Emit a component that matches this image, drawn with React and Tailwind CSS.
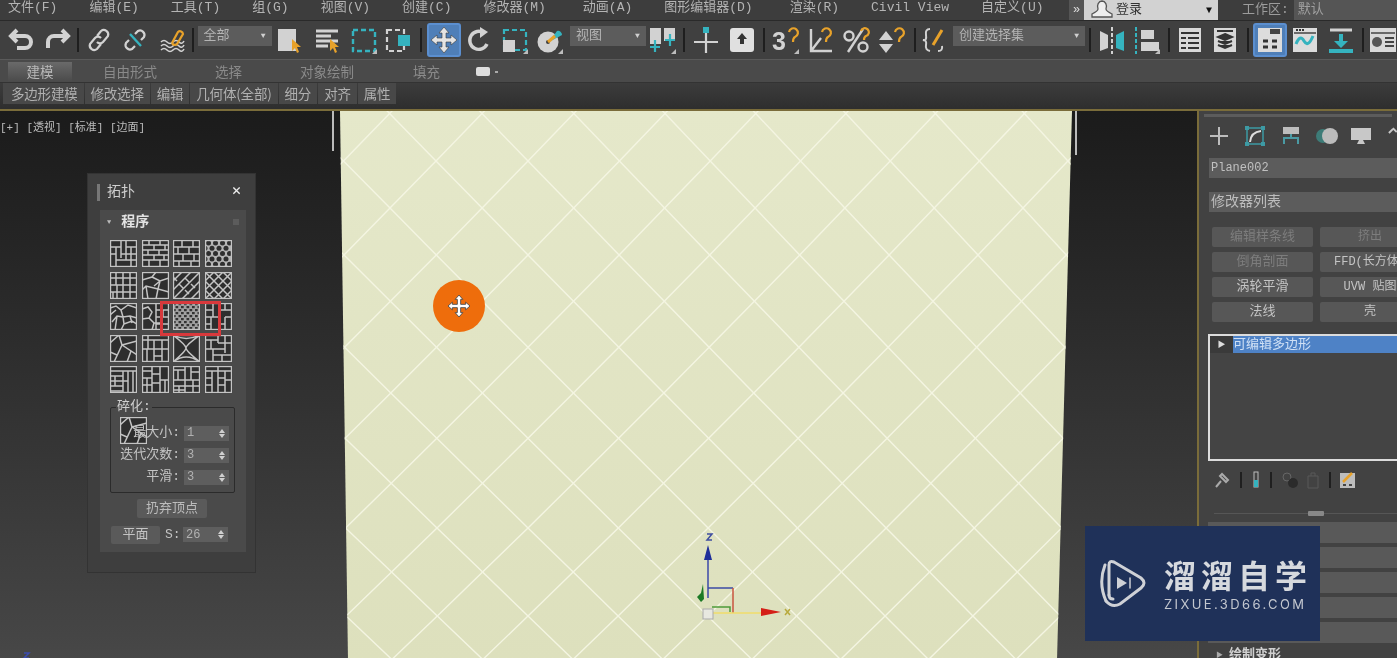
import React from "react";

const LT = "#d2d2d2";
const TEAL = "#35b3bf";
const ORG = "#e8a22a";

const MENUS = [
  ["文件(F)", 32], ["编辑(E)", 32], ["工具(T)", 32], ["组(G)", 32], ["视图(V)", 32], ["创建(C)", 32],
  ["修改器(M)", 37], ["动画(A)", 32], ["图形编辑器(D)", 37], ["渲染(R)", 32], ["Civil View", 32], ["自定义(U)", 0],
];

const Svg = ({ w = 28, h = 28, children }) => (
  <svg width={w} height={h} viewBox={`0 0 ${w} ${h}`} fill="none">{children}</svg>
);

const Corner = () => <path d="M27 28h-5l5-5z" fill="#bdbdbd" />;
const Cursor = ({ x = 16, y = 14 }) => <path d={`M${x} ${y}l0 12 3-3 2 5 2-1-2-5 4 0z`} fill={ORG} />;

const icons = {
  undo: <Svg><path d="M10 4L4 10l6 6M5 10h13a6 6 0 0 1 0 12h-8" stroke={LT} strokeWidth="4" /></Svg>,
  redo: <Svg><path d="M19 4l6 6-6 6M24 10H11a6 6 0 0 0-6 6v6" stroke={LT} strokeWidth="4" /></Svg>,
  link: <Svg><path d="M12 10l4-5a4.5 4.5 0 0 1 7 5l-5 6a4 4 0 0 1-6 0M16 18l-4 5a4.5 4.5 0 0 1-7-5l5-6a4 4 0 0 1 6 0" stroke={LT} strokeWidth="2.2" /></Svg>,
  unlink: <Svg><path d="M14 8l3-3a4.5 4.5 0 0 1 6 6l-3 3M14 20l-3 3a4.5 4.5 0 0 1-6-6l3-3" stroke={LT} strokeWidth="2.2" /><path d="M9 8l11 12" stroke={TEAL} strokeWidth="2.4" /></Svg>,
  bind: <Svg><path d="M3 16q3-3 6 0t6 0 6 0 5-1M3 20q3-3 6 0t6 0 6 0 5-1M3 24q3-3 6 0t6 0 6 0 5-1" stroke={LT} strokeWidth="1.6" /><path d="M14 17l6-11a3 3 0 0 1 5 2l-6 10a3 3 0 0 1-5-1" stroke={ORG} strokeWidth="2.2" /></Svg>,
  select: <Svg><rect x="2" y="3" width="18" height="22" fill={LT} /><Cursor x={16} y={13} /></Svg>,
  byName: <Svg><path d="M3 5h22M3 10h15M3 15h22M3 20h12" stroke={LT} strokeWidth="3" /><Cursor x={17} y={13} /></Svg>,
  rect: <Svg><rect x="3" y="4" width="22" height="21" stroke={TEAL} strokeWidth="2.4" strokeDasharray="5 3" /><Corner /></Svg>,
  win: <Svg><rect x="2" y="4" width="17" height="21" stroke={LT} strokeWidth="2.2" strokeDasharray="5 3" /><rect x="13" y="9" width="12" height="11" fill={TEAL} /></Svg>,
  move: <Svg><path d="M14 1l5 6h-3v5h5V9l6 5-6 5v-3h-5v5h3l-5 6-5-6h3v-5H7v3l-6-5 6-5v3h5V7H9z" fill="#e4e4e4" stroke="#3a3a3a" strokeWidth=".6" /></Svg>,
  rotate: <Svg><path d="M19 7a9 9 0 1 0 3 11" stroke={LT} strokeWidth="3.4" /><path d="M15 1v11l8-6z" fill={LT} /></Svg>,
  scale: <Svg><rect x="3" y="4" width="22" height="20" stroke={TEAL} strokeWidth="2.2" strokeDasharray="5 3" /><rect x="2" y="14" width="12" height="12" fill={LT} /><Corner /></Svg>,
  place: <Svg><circle cx="12" cy="16" r="10.5" fill={LT} /><circle cx="12" cy="16" r="2" fill="#3e3e3e" /><path d="M13 16l8-11a4 4 0 0 1 5 4z" fill={TEAL} /><path d="M12 16l7-6" stroke={ORG} strokeWidth="3" /><Corner /></Svg>,
  mirrorSel: <Svg><rect x="1" y="2" width="11" height="16" fill={LT} /><rect x="15" y="2" width="11" height="13" fill={LT} /><path d="M6 14v12M1 21h10M21 8v12M16 14h10" stroke={TEAL} strokeWidth="2.2" /><Corner /></Svg>,
  snapMove: <Svg><path d="M14 5v22M2 16h24" stroke={LT} strokeWidth="2.2" /><rect x="11" y="1" width="6" height="6" fill={TEAL} /></Svg>,
  upArrow: <Svg><rect x="2" y="2" width="24" height="24" rx="3" fill="#e0e0e0" /><path d="M14 7l5 6h-3v5h-4v-5H9z" fill="#333" /></Svg>,
  snap3: <Svg><text x="0" y="24" fontSize="25" fontWeight="700" fill={LT} fontFamily="Liberation Sans">3</text><path d="M17 6a4.500 4.500 0 1 1 6 5q-2 1-2 5" stroke={ORG} strokeWidth="2.2" /><Corner /></Svg>,
  angle: <Svg><path d="M4 3v22h21M4 25L14 12" stroke={LT} strokeWidth="2.4" /><path d="M15 6a4.500 4.500 0 1 1 6 5q-2 1-2 5" stroke={ORG} strokeWidth="2.2" /></Svg>,
  pct: <Svg><circle cx="7" cy="10" r="4.500" stroke={LT} strokeWidth="2.4" /><circle cx="21" cy="21" r="4.500" stroke={LT} strokeWidth="2.4" /><path d="M6 26L21 3" stroke={LT} strokeWidth="2.4" /><path d="M19 5a4 4 0 1 1 5 5q-2 1-2 4" stroke={ORG} strokeWidth="2.2" /></Svg>,
  spin: <Svg><path d="M8 5l7 9H1zM8 27l7-9H1z" fill={LT} /><path d="M17 6a4.500 4.500 0 1 1 6 5q-2 1-2 5" stroke={ORG} strokeWidth="2.2" /></Svg>,
  braces: <Svg><path d="M9 3Q4 3 5 9t-3 5q4 0 3 5t4 6M17 25q5 0 4-5" stroke={LT} strokeWidth="2" /><path d="M12 19l9-15" stroke={ORG} strokeWidth="3" /></Svg>,
  mirror: <Svg><path d="M2 5l8 4v13l-8 3z" fill={LT} /><path d="M26 5l-8 4v13l8 3z" fill={TEAL} /><path d="M14 1v27" stroke={LT} strokeWidth="2" strokeDasharray="4 2" /></Svg>,
  align: <Svg><path d="M3 1v27" stroke={TEAL} strokeWidth="2" strokeDasharray="4 2" /><rect x="8" y="4" width="13" height="9" fill={LT} /><rect x="8" y="16" width="18" height="9" fill={LT} /><Corner /></Svg>,
  table: <Svg><rect x="3" y="2" width="22" height="24" fill="#d8d8d8" /><path d="M5 7h18M5 12h5M12 12h11M5 17h5M12 17h11M5 22h5M12 22h11" stroke="#333" strokeWidth="2" /></Svg>,
  stack: <Svg><rect x="3" y="2" width="22" height="24" fill="#d8d8d8" /><path d="M6 5h16" stroke="#333" strokeWidth="2" /><path d="M14 8l7 3-7 3-7-3zM7 15l7 3 7-3M7 19l7 3 7-3" stroke="#333" strokeWidth="2" fill="#333" /></Svg>,
  schematic: <Svg><rect x="2" y="2" width="24" height="24" fill="#dcdcdc" /><path d="M14 8V3h10v5z" fill="#444" /><path d="M7 15h5M16 15h5M7 21h5M16 21h5" stroke="#333" strokeWidth="3" /></Svg>,
  curve: <Svg><rect x="2" y="2" width="24" height="24" fill="#dcdcdc" /><path d="M3 7h22" stroke="#444" strokeWidth="1.500" /><path d="M5 18q4-10 8-3t9-5" stroke={TEAL} strokeWidth="3" /><path d="M5 4h8" stroke="#333" strokeWidth="2" strokeDasharray="2 1" /></Svg>,
  dl: <Svg><path d="M3 4h22" stroke={LT} strokeWidth="3" /><path d="M12 8h4v7h5l-7 7-7-7h5z" fill={TEAL} /><path d="M2 25h24" stroke={TEAL} strokeWidth="4" /></Svg>,
  render: <Svg><rect x="2" y="2" width="26" height="24" fill="#d8d8d8" /><path d="M3 7h24" stroke="#444" strokeWidth="1.500" /><circle cx="9" cy="16" r="5" fill="#555" /><path d="M17 12h9M17 16h9M17 20h9" stroke="#444" strokeWidth="2" /></Svg>,
  login: <svg width="24" height="20" viewBox="0 0 24 20" fill="none"><path d="M12 1a4.500 5.500 0 0 1 4 8q0 2 6 5v3H2v-3q6-3 6-5a4.500 5.500 0 0 1 4-8z" stroke="#555" strokeWidth="1.300" fill="#eee" /></svg>,
};

const Cell = ({ w = 36, name, active }) => (
  <div style={{ width: w }} className="flex h-[36px] shrink-0 items-center justify-center">
    {active ? (
      <div className="flex h-[34px] w-[34px] items-center justify-center rounded-[3px] border-2 border-[#5b8fd0] bg-[#4f7fb8]">{icons[name]}</div>
    ) : (
      icons[name]
    )}
  </div>
);

const Sep = ({ w = 6 }) => (
  <div style={{ width: w }} className="flex shrink-0 justify-center">
    <div className="h-[24px] w-[2px] bg-[#1e1e1e]" />
  </div>
);

const Drop = ({ label, w }) => (
  <div style={{ width: w }} className="flex h-[20px] shrink-0 -translate-y-[4px] items-center justify-between bg-[#5c5c5c] pl-[6px] pr-[6px] text-[13px] text-[#b4b4b4]">
    <span>{label}</span>
    <span className="text-[8px] text-[#cfcfcf]">▼</span>
  </div>
);

// 20 topology thumbnails, each is a path of lines in a 27 unit box
const TOPO = [
  "M0 7h11M11 0v18M0 14h6M6 7v20M6 20h21M16 0v20M16 7h11M21 7v20M11 14h16",
  "M0 5h27M0 10h27M0 15h27M0 20h27M7 0v5M18 0v5M12 5v5M23 5v5M6 10v5M17 10v5M12 15v5M22 15v5M7 20v7M18 20v7",
  "M0 7h27M0 14h27M0 21h27M9 0v7M20 0v7M5 7v7M16 7v7M10 14v7M21 14v7M6 21v6M18 21v6",
  null,
  "M0 6h27M0 13h27M0 20h27M6 0v13M13 0v27M20 6v21M7 13v14M20 0v6M3 20v7",
  "M0 8L10 5 14 0M10 5l8 4 9-3M18 9l-2 8 11 3M16 17L4 14 0 18M4 14l2 13M16 17l-2 10M18 9L12 14",
  "M0 9L9 0M0 18L18 0M0 27L27 0M9 27L27 9M18 27l9-9M0 5l4 4M12 6l4 4M6 12l4 4M18 12l4 4M12 18l4 4",
  "M0 0l27 27M27 0L0 27M9 0l18 18M18 0l9 9M0 9l18 18M0 18l9 9M18 0L0 18M9 0L0 9M27 9L9 27M27 18l-9 9",
  "M0 5l6-2 5 4 7-5 9 3M0 12l6-5M11 7l2 7 7-1 7 2M2 19l5-6 6 1 1 7 8-3 5 3M7 13l-2 14M14 21l-3 6M20 13l2 7",
  "M0 6l6-2 4 5-3 6-7 1M7 15l5 5-2 7M12 20l6 0M14 0v27M14 7h13M14 14h13M14 21h13M21 7v7M20 21v6",
  null,
  "M0 7h8M8 0v14M0 14h14M14 7v20M14 7h13M20 0v7M20 14h7M20 14v13M6 14v13M0 21h6M14 21h6",
  "M0 8l9-8M9 0l3 10 15-4M12 10L4 27M12 10l15 10M0 17l7 3M21 16l-4 11",
  "M0 5h27M6 0v14M0 14h12M12 5v22M12 14h15M20 5v9M20 14v13M5 14v13M12 21h8",
  "M0 0q13 10 13 13T0 27M27 0q-14 10-14 13t14 14M0 0q13 7 27 0M0 27q13-10 27 0",
  "M0 5h13M13 0v8M20 0v8M13 8h14M6 5v9M0 14h20M20 8v10M8 14v13M8 20h19M17 20v7",
  "M0 5h27M0 10h13M0 15h13M0 20h13M0 25h13M5 10v10M13 5v22M18 5v22M23 5v22M13 15h5",
  "M0 5h10M10 0v27M0 12h10M0 19h10M5 12v15M10 8h8M18 0v27M18 14h9M23 14v13M10 17h8",
  "M0 4h12M12 0v14M0 14h27M5 4v10M18 0v14M18 6h9M0 20h27M6 20v7M12 14v13M20 14v13M0 24h12",
  "M0 5h27M7 5v22M13 0v27M20 5v22M0 12h7M0 19h7M13 12h7M13 19h7M20 14h7",
];

const Thumb = ({ i }) => (
  <svg width="27" height="27" viewBox="0 0 27 27" className="bg-[#2e2e2e]" fill="none">
    {TOPO[i] && <path d={TOPO[i]} stroke="#c4c4c4" strokeWidth="1.500" />}
    {i === 3 && (
      <>
        <rect width="27" height="27" fill="#b4b4b4" />
        {[0, 1, 2, 3, 4].flatMap((r) =>
          [0, 1, 2, 3].map((c) => <circle key={`${r}${c}`} cx={(r % 2 ? 0 : 3.500) + c * 7} cy={3 + r * 5.300} r="2.500" fill="#2e2e2e" />)
        )}
      </>
    )}
    {i === 10 && (
      <>
        <rect width="27" height="27" fill="#a0a0a0" />
        {[0, 1, 2, 3, 4, 5, 6, 7, 8].flatMap((r) =>
          [0, 1, 2, 3, 4].map((c) => <rect key={`${r}${c}`} x={(r % 2 ? 2.500 : 0) + c * 5.500} y={r * 3} width="2.700" height="2.200" fill="#333" />)
        )}
      </>
    )}
    <rect x=".6" y=".6" width="25.800" height="25.800" stroke="#c4c4c4" strokeWidth="1.200" />
  </svg>
);

const Spinner = ({ v }) => (
  <div className="flex h-[15px] w-[45px] items-center justify-between bg-[#5e5e5e] pl-[3px] pr-[4px] text-[12px] leading-none text-[#b2b2b2]">
    <span>{v}</span>
    <span className="flex flex-col gap-[1px]">
      <span className="h-0 w-0 border-x-[3px] border-b-[4px] border-x-transparent border-b-[#d0d0d0]" />
      <span className="h-0 w-0 border-x-[3px] border-t-[4px] border-x-transparent border-t-[#d0d0d0]" />
    </span>
  </div>
);

const SpinRow = ({ label, v }) => (
  <div className="relative flex h-[22px] items-center justify-end gap-[4px] pr-[5px] text-[13px] text-[#c4c4c4]">
    <span>{label}</span>
    <Spinner v={v} />
  </div>
);

function TopoPanel() {
  return (
    <div className="absolute left-[88px] top-[63px] flex h-[398px] w-[167px] flex-col bg-[#3e3e3e] pl-[12px] pr-[9px] text-[#cfcfcf] shadow-[0_0_0_1px_#333]">
      <div className="flex h-[36px] shrink-0 items-center text-[14px]">
        <span className="mr-[7px] h-[17px] w-[3px] -translate-x-[3px] bg-[#777]" />
        <span className="-translate-x-[3px]">拓扑</span>
        <span className="ml-auto mr-[5px] text-[15px] font-bold text-[#eee]">✕</span>
      </div>
      <div className="relative flex h-[342px] flex-col bg-[#4a4a4a]">
        <div className="flex h-[24px] items-center px-[7px] text-[14px] font-bold text-[#e2e2e2]">
          <span className="mr-[10px] text-[7px] text-[#bbb]">▼</span>
          程序
          <span className="ml-auto h-[6px] w-[6px] bg-[#5c5c5c]" />
        </div>
        <div className="ml-[10px] mt-[6px] grid w-[122px] grid-cols-4 gap-x-[4.500px] gap-y-[4.500px]">
          {TOPO.map((_, i) => (
            <Thumb key={i} i={i} />
          ))}
        </div>
        <div className="absolute left-[60px] top-[91px] h-[35px] w-[61px] border-[3px] border-[#d8393c]" />
        <div className="relative ml-[10px] mt-[14px] h-[86px] w-[125px] rounded-[2px] border border-[#2b2b2b] pt-[14px]">
          <span className="absolute -top-[9px] left-[5px] bg-[#4a4a4a] px-[1px] text-[13px] leading-[16px] text-[#d0d0d0]">碎化:</span>
          <div className="absolute left-[9px] top-[9px]"><Thumb i={12} /></div>
          <SpinRow label="最大小:" v="1" />
          <SpinRow label="迭代次数:" v="3" />
          <SpinRow label="平滑:" v="3" />
        </div>
        <div className="mx-auto mt-[6px] flex h-[19px] w-[70px] -translate-x-[1px] items-center justify-center rounded-[2px] bg-[#5a5a5a] text-[13px] text-[#bcbcbc]">扔弃顶点</div>
        <div className="mt-[7px] flex items-center pl-[11px] text-[13px] text-[#c4c4c4]">
          <span className="flex h-[18px] w-[49px] items-center justify-center rounded-[2px] bg-[#5a5a5a]">平面</span>
          <span className="ml-[5px] mr-[7px] w-[11px]">S:</span>
          <Spinner v="26" />
        </div>
      </div>
    </div>
  );
}

// place of a tile corner on the plane, r counts rows, k half columns
function tileCorner(r, k) {
  const y = 161 + 47.3 * r - 0.18 * r * r;
  const x = 390 + 46.2 * k - 0.07 * k * k - (y - 200) * (k - 3) * 0.0014;
  return `${x.toFixed(1)} ${(y - 111).toFixed(1)}`;
}

function planeLines() {
  const out = [];
  for (let c = -17; c <= 33; c += 2) {
    const down = [];
    const up = [];
    for (let r = -3; r <= 13; r++) {
      down.push(tileCorner(r, c + r));
      up.push(tileCorner(r, c - r));
    }
    out.push("M" + down.join("L"), "M" + up.join("L"));
  }
  return out;
}

function Viewport() {
  return (
    <div className="relative h-[549px] min-w-0 flex-1 overflow-hidden border-t-2 border-[#7a6c3a] bg-linear-to-b from-[#1b1b1b] to-[#474747]">
      <svg className="absolute left-0 top-0" width="1197" height="549" fill="none">
        <defs>
          <clipPath id="plane"><path d="M340 0H1072L1057 549H348z" /></clipPath>
          <linearGradient id="planeFill" x1="0" y1="0" x2="0" y2="1">
            <stop offset="0" stopColor="#e5e8ca" />
            <stop offset="1" stopColor="#dde0bd" />
          </linearGradient>
        </defs>
        <path d="M340 0H1072L1057 549H348z" fill="url(#planeFill)" />
        <g clipPath="url(#plane)" stroke="#f4f5e2" strokeWidth="1.400">
          {planeLines().map((d, i) => (
            <path key={i} d={d} />
          ))}
        </g>
        <path d="M333 0v40M1076 0v44" stroke="#bbb" strokeWidth="2" />
        {/* transform gizmo */}
        <path d="M708 440V487" stroke="#3c48a8" strokeWidth="1.500" />
        <path d="M708 434l-4 15h8z" fill="#1f2f9a" />
        <path d="M707 423h5l-5 6h5" stroke="#3f4ea0" strokeWidth="1.500" />
        <path d="M708 477h25" stroke="#3b4aa5" strokeWidth="1.500" />
        <path d="M733 477v25" stroke="#c8553f" strokeWidth="1.500" />
        <path d="M713 502h48" stroke="#f0dc6a" strokeWidth="1.500" />
        <path d="M712 496h18v5" stroke="#4d9a3a" strokeWidth="1.500" />
        <path d="M761 497l20 4-20 4z" fill="#d41f16" />
        <path d="M785 498l5 6M790 498l-5 6" stroke="#b8a93c" strokeWidth="1.500" />
        <path d="M703 473l-2 9-4 4 4 5 3-3z" fill="#1c7a25" />
        <rect x="703" y="498" width="10" height="10" fill="#e8e8e0" stroke="#aaa" />
        <path d="M24 542h5l-5 5h5" stroke="#3c4cae" strokeWidth="1.500" />
      </svg>
      <div className="absolute left-0 top-[9px] text-[11px] text-[#bcbcbc]">[+] [透视] [标准] [边面]</div>
      <div className="absolute left-[433px] top-[169px] flex h-[52px] w-[52px] items-center justify-center rounded-full bg-[#ee6d0c]">
        <svg width="22" height="22" viewBox="0 0 20 20"><path d="M10 0l3.500 4H11.500v4.500H16V6.500l4 3.500-4 3.500V11.500H11.500V16h2L10 20l-3.500-4h2V11.500H4v2L0 10l4-3.500v2h4.500V4h-2z" fill="#fff" stroke="#4a4a4a" strokeWidth=".8" /></svg>
      </div>
      <TopoPanel />
    </div>
  );
}

const BTNS = [
  ["编辑样条线", "挤出", true],
  ["倒角剖面", "FFD(长方体)", true],
  ["涡轮平滑", "UVW 贴图", false],
  ["法线", "壳", false],
];

function SidePanel() {
  return (
    <aside className="flex h-[549px] w-[200px] shrink-0 flex-col overflow-hidden border-l-2 border-t-2 border-[#7a6c3a] bg-[#424242] text-[13px] text-[#b8b8b8]">
      <div className="mx-[5px] mt-[3px] h-[3px] shrink-0 bg-[#5c5c5c]" />
      <div className="mt-[5px] flex h-[28px] shrink-0 items-center pl-[10px]">
        <div className="flex w-[36px]">
          <svg width="20" height="20" viewBox="0 0 20 20"><path d="M10 1v18M1 10h18" stroke="#bdbdbd" strokeWidth="2" /></svg>
        </div>
        <div className="flex w-[36px]">
          <svg width="22" height="22" viewBox="0 0 22 22" fill="none"><rect x="3" y="3" width="16" height="16" stroke="#3d9aa4" strokeWidth="1.500" /><path d="M1 1h4v4H1zM17 1h4v4h-4zM1 17h4v4H1zM17 17h4v4h-4z" fill="#3d9aa4" /><path d="M6 17q1-10 11-11" stroke="#ddd" strokeWidth="2" /></svg>
        </div>
        <div className="flex w-[36px]">
          <svg width="22" height="22" viewBox="0 0 22 22" fill="none"><rect x="3" y="2" width="16" height="7" fill="#bdbdbd" /><path d="M11 9v4M4 19v-6h14v6" stroke="#4a9aa4" strokeWidth="2" /></svg>
        </div>
        <div className="flex w-[36px]">
          <svg width="26" height="20" viewBox="0 0 26 20"><circle cx="8" cy="10" r="7" fill="#3d7c78" /><circle cx="15" cy="10" r="8" fill="#bcbcbc" /></svg>
        </div>
        <div className="flex w-[36px]">
          <svg width="22" height="22" viewBox="0 0 22 22"><rect x="1" y="3" width="20" height="12" fill="#c8c8c8" /><path d="M7 19h8l-2-4H9z" fill="#c8c8c8" /></svg>
        </div>
        <svg width="12" height="22" viewBox="0 0 12 22" fill="none"><path d="M8 3l4 4M8 4L4 8" stroke="#c8c8c8" strokeWidth="2" /></svg>
      </div>
      <div className="ml-[10px] mt-[8px] flex h-[20px] shrink-0 items-center bg-[#5c5c5c] pl-[2px] text-[12px] text-[#c0c0c0]">Plane002</div>
      <div className="ml-[10px] mt-[14px] flex h-[20px] shrink-0 items-center bg-[#5c5c5c] pl-[2px] text-[14px] text-[#bdbdbd]">修改器列表</div>
      <div className="ml-[13px] mt-[15px] grid shrink-0 grid-cols-[101px_100px] gap-x-[7px] gap-y-[5px]">
        {BTNS.map(([a, b, dim], i) => (
          <React.Fragment key={i}>
            <div className={`flex h-[20px] items-center justify-center rounded-[2px] bg-[#575757] ${dim ? "text-[#7d7d7d]" : "text-[#c4c4c4]"}`}>{a}</div>
            <div className={`flex h-[20px] items-center justify-center rounded-[2px] bg-[#575757] ${i === 0 ? "text-[#7d7d7d]" : "text-[#c4c4c4]"}`}>
              <span className="whitespace-nowrap text-[12px]">{b}</span>
            </div>
          </React.Fragment>
        ))}
      </div>
      <div className="ml-[9px] mt-[12px] h-[127px] shrink-0 border-2 border-r-0 border-[#dcdcdc] bg-[#444]">
        <div className="flex h-[17px] bg-[#3a3a3a]">
          <span className="flex w-[23px] items-center justify-center text-[8px] text-[#ddd]">▶</span>
          <span className="flex-1 bg-[#4e82c6] text-[13px] leading-[17px] text-[#cfe0f5]">可编辑多边形</span>
        </div>
      </div>
      <div className="ml-[16px] mt-[9px] flex h-[20px] shrink-0 items-center">
        <svg width="16" height="18" viewBox="0 0 16 18" fill="none"><path d="M1 16l5-6M5 5l6 6 2-2-6-6z" stroke="#aaa" strokeWidth="2" /></svg>
        <span className="mx-[9px] h-[16px] w-[2px] bg-[#1f1f1f]" />
        <svg width="10" height="18" viewBox="0 0 10 18" fill="none"><rect x="3" y="1" width="4" height="15" stroke="#bbb" /><rect x="3" y="9" width="4" height="7" fill={TEAL} /></svg>
        <span className="mx-[9px] h-[16px] w-[2px] bg-[#1f1f1f]" />
        <svg width="18" height="18" viewBox="0 0 18 18"><circle cx="6" cy="6" r="4" fill="none" stroke="#666" /><circle cx="12" cy="12" r="5" fill="#2b2b2b" /></svg>
        <svg className="ml-[7px]" width="14" height="18" viewBox="0 0 14 18" fill="none"><path d="M2 5h10v12H2zM5 5V2h4v3" stroke="#595959" /></svg>
        <span className="mx-[9px] h-[16px] w-[2px] bg-[#1f1f1f]" />
        <svg width="16" height="18" viewBox="0 0 16 18"><rect y="2" width="15" height="15" fill="#bdbdbd" /><path d="M3 11l9-9" stroke={ORG} strokeWidth="2.500" /><path d="M3 14h3M9 14h3" stroke="#444" strokeWidth="2" /></svg>
      </div>
      <div className="relative ml-[15px] mt-[23px] h-[1px] shrink-0 bg-[#565656]">
        <span className="absolute -top-[2px] left-[94px] h-[5px] w-[16px] rounded-[1px] bg-[#888]" />
      </div>
      <div className="ml-[9px] mt-[8px] flex shrink-0 flex-col gap-[4px]">
        {["", "", "", "", ""].map((_, i) => (
          <div key={i} className="h-[21px] bg-[#595959]" />
        ))}
        <div className="flex h-[14px] items-start pl-[8px] text-[13px] font-bold leading-[16px] text-[#d0d0d0]">
          <span className="mr-[6px] text-[7px] text-[#aaa]">▶</span>绘制变形
        </div>
      </div>
    </aside>
  );
}

export default function App() {
  return (
    <div className="relative h-[658px] w-[1397px] overflow-hidden bg-[#3c3c3c] font-['Liberation_Mono','Noto_Sans_CJK_SC',monospace] blur-[0.5px]">
      {/* menu */}
      <div className="flex h-[21px] items-center overflow-hidden border-b border-[#2a2a2a] bg-[#3d3d3d] pl-[8px] text-[13px] text-[#b4b4b4]">
        <div className="flex w-[1061px] shrink-0 -translate-y-[2px]">
          {MENUS.map(([m, gap]) => (
            <span key={m} style={{ marginRight: gap }} className="whitespace-nowrap">{m}</span>
          ))}
        </div>
        <span className="w-[15px] shrink-0 bg-[#555] text-center text-[12px] leading-[20px] text-[#ddd]">»</span>
        <div className="flex h-[21px] w-[134px] shrink-0 items-center bg-[#d2d2d2] pl-[6px] pr-[6px] text-[#333]">
          {icons.login}
          <span className="ml-[2px]">登录</span>
          <span className="ml-auto text-[10px] text-[#111]">▼</span>
        </div>
        <span className="ml-[24px] shrink-0 text-[#9c9c9c]">工作区:</span>
        <span className="ml-[5px] flex h-[21px] flex-1 items-center bg-[#555] pl-[4px] text-[#a0a0a0]">默认</span>
      </div>
      {/* main toolbar */}
      <div className="flex h-[38px] items-center bg-[#404040] pl-[3px]">
        <Cell name="undo" /><Cell name="redo" />
        <Sep />
        <Cell name="link" /><Cell name="unlink" /><Cell name="bind" w={37} />
        <Sep />
        <div className="w-[2px]" />
        <Drop label="全部" w={74} />
        <div className="w-[1px]" />
        <Cell name="select" /><Cell name="byName" w={37} /><Cell name="rect" w={37} /><Cell name="win" w={34} />
        <Sep w={10} />
        <Cell name="move" w={35} active />
        <Cell name="rotate" w={36} /><Cell name="scale" w={35} /><Cell name="place" w={36} />
        <div className="w-[2px]" />
        <Drop label="视图" w={76} />
        <Cell name="mirrorSel" w={34} />
        <Sep w={8} />
        <Cell name="snapMove" w={36} /><Cell name="upArrow" w={36} />
        <Sep w={8} />
        <Cell name="snap3" w={37} /><Cell name="angle" w={33} /><Cell name="pct" w={36} /><Cell name="spin" w={36} />
        <Sep w={10} />
        <Cell name="braces" w={30} />
        <div className="w-[4px]" />
        <Drop label="创建选择集" w={132} />
        <Sep w={10} />
        <Cell name="mirror" w={34} /><Cell name="align" w={36} />
        <Sep w={8} />
        <Cell name="table" w={34} /><Cell name="stack" w={36} />
        <Sep w={10} />
        <Cell name="schematic" w={34} active /><Cell name="curve" w={36} /><Cell name="dl" w={36} />
        <Sep w={8} />
        <Cell name="render" w={30} />
      </div>
      {/* ribbon tabs */}
      <div className="flex h-[23px] items-end border-t border-[#5a5a5a] bg-[#4a4a4a] pl-[8px] font-['Noto_Sans_CJK_SC',sans-serif] text-[13.500px] leading-[22px] text-[#8a8a8a]">
        <span className="flex h-[20px] w-[64px] items-center justify-center bg-linear-to-b from-[#6a6a6a] to-[#4a4a4a] pb-[2px] text-[#b8b8b8]">建模</span>
        <span className="ml-[31px]">自由形式</span>
        <span className="ml-[58px]">选择</span>
        <span className="ml-[58px]">对象绘制</span>
        <span className="ml-[59px]">填充</span>
        <span className="mb-[6px] ml-[36px] h-[9px] w-[14px] rounded-[2px] bg-[#ddd]" />
        <span className="mb-[9px] ml-[5px] h-[2px] w-[3px] bg-[#aaa]" />
      </div>
      {/* ribbon panels */}
      <div className="flex h-[27px] border-t border-[#333] bg-linear-to-b from-[#3c3c3c] to-[#2e2e2e] pl-[3px] font-['Noto_Sans_CJK_SC',sans-serif] text-[13.500px] text-[#b0b0b0]">
        {["多边形建模", "修改选择", "编辑", "几何体(全部)", "细分", "对齐", "属性"].map((t) => (
          <span key={t} className="mr-[1px] flex h-[21px] items-center whitespace-nowrap bg-[#484848] px-[6px] pb-[1px] tracking-[-0.2px] first:pl-[8px]">{t}</span>
        ))}
      </div>
      {/* workspace */}
      <div className="flex">
        <Viewport />
        <SidePanel />
      </div>
      {/* site watermark */}
      <div className="absolute left-[1085px] top-[526px] flex h-[115px] w-[235px] items-center bg-[#1f3159] pl-[13px] text-[#d6d9de]">
        <svg width="50" height="52" viewBox="0 0 50 52" fill="none" stroke="#cfd1d6" strokeLinecap="round">
          <path d="M11 37V7q0-5 5-3l27 16q6 5 0 10L22 46q-8 4-14-3" strokeWidth="3" />
          <path d="M7 7q-7 18 1 36" strokeWidth="3" />
          <path d="M11 37q0 4 4 4" strokeWidth="3" />
          <path d="M19 19l10 6-10 6z" fill="#cfd1d6" stroke="none" />
          <path d="M32 20v10" strokeWidth="1.500" />
        </svg>
        <div className="ml-[16px] flex flex-col">
          <span className="whitespace-nowrap font-['Noto_Sans_CJK_SC',sans-serif] text-[32px] font-bold leading-[40px] tracking-[5px]">溜溜自学</span>
          <span className="mt-[1px] font-['Inter',sans-serif] text-[13px] leading-[18px] tracking-[2.400px] text-[#c3c7cf]">ZIXUE.3D66.COM</span>
        </div>
      </div>
    </div>
  );
}
